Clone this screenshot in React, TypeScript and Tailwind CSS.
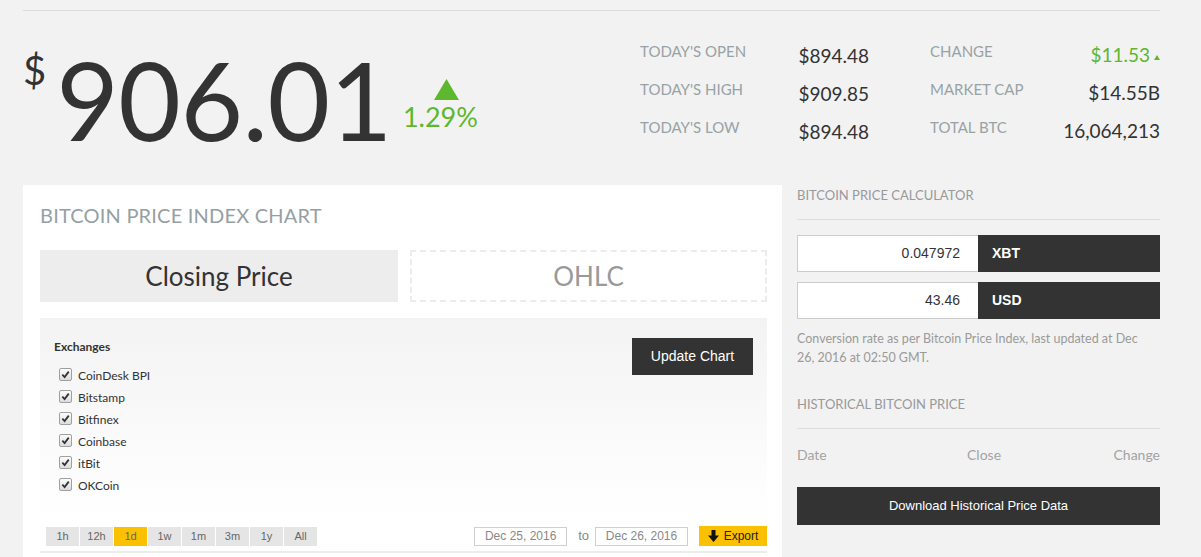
import React from 'react';

const sans = { fontFamily: 'Lato, "Open Sans", sans-serif' };
const arial = { fontFamily: '"Liberation Sans", Arial, sans-serif' };

const stats = [
  { label: "TODAY'S OPEN", value: '$894.48', label2: 'CHANGE', value2: '$11.53', up: true },
  { label: "TODAY'S HIGH", value: '$909.85', label2: 'MARKET CAP', value2: '$14.55B' },
  { label: "TODAY'S LOW", value: '$894.48', label2: 'TOTAL BTC', value2: '16,064,213' },
];

const exchanges = ['CoinDesk BPI', 'Bitstamp', 'Bitfinex', 'Coinbase', 'itBit', 'OKCoin'];
const ranges = ['1h', '12h', '1d', '1w', '1m', '3m', '1y', 'All'];

const CheckBox = () => (
  <span className="w-[13px] h-[13px] rounded-[2px] border border-[#a0a0a0] bg-gradient-to-b from-[#fdfdfd] to-[#dcdcdc] flex items-center justify-center">
    <svg width="9" height="9" viewBox="0 0 10 10">
      <path d="M1.5 5.2 L4 7.8 L8.6 1.8" fill="none" stroke="#333" strokeWidth="2" />
    </svg>
  </span>
);

const App = () => {
  return (
    <div className="w-[1201px] h-[557px] bg-[#f2f2f2] overflow-hidden text-[#333]" style={sans}>
      <div className="mx-[23px] w-[1137px] pt-[10px]">
        <div className="border-t border-[#dcdcdc]" />

        {/* Price header */}
        <div className="flex h-[174px]">
          <div className="flex items-start pt-[30px] w-[600px]">
            <span className="text-[40px] leading-none mt-[9px] mr-[10px]">$</span>
            <span className="text-[108px] leading-none tracking-[-0.5px] mt-[4px]">906.01</span>
            <div className="flex flex-col items-center ml-[11px] mt-[38px]">
              <svg width="25" height="21" viewBox="0 0 25 21" className="ml-[12px]">
                <polygon points="12.5,0 25,21 0,21" fill="#5db82e" />
              </svg>
              <span className="text-[27px] leading-none text-[#5db82e] mt-[3px]">1.29%</span>
            </div>
          </div>
          <div className="ml-[17px] pt-[31px] flex-1">
            {stats.map((s) => (
              <div key={s.label} className="flex h-[38px] items-start">
                <span className="w-[150px] text-[15px] text-[#98a2a5] leading-none pt-[2px]">{s.label}</span>
                <span className="w-[79px] text-right text-[19px] leading-none pt-[4px]">{s.value}</span>
                <span className="ml-[61px] w-[120px] text-[15px] text-[#98a2a5] leading-none pt-[2px]">{s.label2}</span>
                <span
                  className={`flex-1 text-right text-[19px] leading-none pt-[3px] flex items-center justify-end ${s.up ? 'text-[#5db82e]' : ''}`}
                >
                  {s.value2}
                  {s.up && (
                    <svg width="6" height="5" viewBox="0 0 6 5" className="ml-[4px] mt-[6px]">
                      <polygon points="3,0 6,5 0,5" fill="#5db82e" />
                    </svg>
                  )}
                </span>
              </div>
            ))}
          </div>
        </div>

        <div className="flex gap-[15px]">
          {/* Chart card */}
          <div className="w-[759px] h-[400px] bg-white pl-[17px] pr-[15px] pt-[20px]">
            <h2 className="text-[20px] leading-none text-[#95a0a3] tracking-[0.2px]">BITCOIN PRICE INDEX CHART</h2>
            <div className="flex gap-[12px] mt-[25px]">
              <div className="w-[358px] h-[52px] bg-[#ededed] flex items-center justify-center text-[26px] text-[#333]">
                Closing Price
              </div>
              <div className="w-[357px] h-[52px] border-2 border-dashed border-[#ececec] flex items-center justify-center text-[26px] text-[#999]">
                OHLC
              </div>
            </div>
            <div className="mt-[16px] h-[200px] bg-gradient-to-b from-[#f3f3f3] to-white px-[14px] pt-[20px] flex justify-between">
              <div>
                <div className="text-[12px] font-bold leading-none mt-[3px]" style={sans}>Exchanges</div>
                <div className="mt-[15px] flex flex-col gap-[9px]">
                  {exchanges.map((e) => (
                    <div key={e} className="flex items-center h-[13px]">
                      <span className="ml-[5px]">
                        <CheckBox />
                      </span>
                      <span className="ml-[6px] text-[12px] text-[#333] leading-none pt-[2px]">{e}</span>
                    </div>
                  ))}
                </div>
              </div>
              <button
                className="h-[37px] w-[121px] bg-[#333] text-white text-[14px] mt-[0px]"
                style={arial}
              >
                Update Chart
              </button>
            </div>
            <div className="mt-[8px] flex items-center justify-between border-b-2 border-[#ececec] pb-[5px]" style={arial}>
              <div className="flex gap-[1px] ml-[6px]">
                {ranges.map((r) => (
                  <span
                    key={r}
                    className={`w-[33px] h-[19px] flex items-center justify-center text-[11px] text-[#666] ${r === '1d' ? 'bg-[#fbc000]' : 'bg-[#e5e5e5]'}`}
                  >
                    {r}
                  </span>
                ))}
              </div>
              <div className="flex items-center text-[12px] text-[#888]">
                <span className="w-[93px] h-[19px] border border-[#d0d0d0] flex items-center justify-center">Dec 25, 2016</span>
                <span className="ml-[11px] mr-[6px] text-[13px] text-[#888]">to</span>
                <span className="w-[93px] h-[19px] border border-[#d0d0d0] flex items-center justify-center">Dec 26, 2016</span>
                <span className="ml-[11px] w-[68px] h-[20px] bg-[#fbc000] flex items-center justify-center text-[#222]">
                  <svg width="11" height="12" viewBox="0 0 11 12" className="mr-[5px]">
                    <path d="M3.5 0 H7.5 V5.5 H11 L5.5 12 L0 5.5 H3.5 Z" fill="#111" />
                  </svg>
                  Export
                </span>
              </div>
            </div>
          </div>

          {/* Right column */}
          <div className="w-[363px] pt-[4px]">
            <h3 className="text-[13px] leading-none text-[#999] pb-[17px] border-b border-[#dcdcdc]">BITCOIN PRICE CALCULATOR</h3>
            <div className="mt-[15px] flex flex-col gap-[10px]" style={arial}>
              {[
                ['0.047972', 'XBT'],
                ['43.46', 'USD'],
              ].map(([v, c]) => (
                <div key={c} className="flex h-[37px]">
                  <div className="w-[181px] bg-white border border-[#ccc] border-r-0 flex items-center justify-end pr-[18px] text-[14px] text-[#333]">
                    {v}
                  </div>
                  <div className="flex-1 bg-[#333] text-white font-bold text-[14px] flex items-center pl-[14px]">{c}</div>
                </div>
              ))}
            </div>
            <p className="mt-[10px] text-[12.5px] leading-[19px] text-[#9a9a9a] pr-[4px]">
              Conversion rate as per Bitcoin Price Index, last updated at Dec 26, 2016 at 02:50 GMT.
            </p>
            <h3 className="mt-[31px] text-[13px] leading-none text-[#999] pb-[17px] border-b border-[#dcdcdc]">HISTORICAL BITCOIN PRICE</h3>
            <div className="mt-[15px] flex text-[14px] text-[#a3a3a3]">
              <span className="w-[170px]">Date</span>
              <span>Close</span>
              <span className="ml-auto">Change</span>
            </div>
            <button className="mt-[22px] w-full h-[38px] bg-[#333] text-white text-[13px]" style={arial}>
              Download Historical Price Data
            </button>
          </div>
        </div>
      </div>
    </div>
  );
};

export default App;
